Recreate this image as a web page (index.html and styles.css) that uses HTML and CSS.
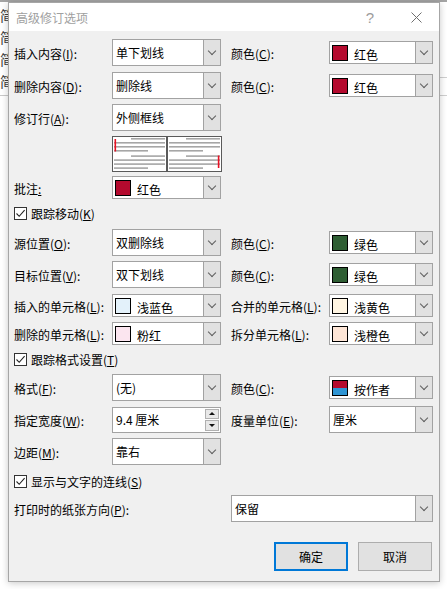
FILE: index.html
```html
<!DOCTYPE html>
<html lang="zh-CN">
<head>
<meta charset="utf-8">
<title>高级修订选项</title>
<link rel="stylesheet" href="styles.css">
</head>
<body>
<div class="topstrip"></div>
<div class="doc-left">
  <span>简</span><span>简</span><span>简</span><span>简</span>
</div>
<div class="doc-left-rule"></div>
<div class="doc-right"></div>

<div class="dialog">
  <div class="titlebar">
    <span class="title">高级修订选项</span>
    <span class="tbtn help">?</span>
    <span class="tbtn close"><svg width="11" height="11" viewBox="0 0 11 11"><path d="M0.5 0.5 L10.5 10.5 M10.5 0.5 L0.5 10.5" stroke="#6f6f6f" stroke-width="1" fill="none"/></svg></span>
  </div>

  <div class="content">
    <div class="row m8">
      <span class="lbl">插入内容(<u>I</u>):</span>
      <div class="combo"><span class="val">单下划线</span><span class="arrow"></span></div>
      <span class="lbl r">颜色(<u>C</u>):</span>
      <div class="combo sm"><span class="sw red"></span><span class="val c">红色</span><span class="arrow"></span></div>
    </div>

    <div class="row m6">
      <span class="lbl">删除内容(<u>D</u>):</span>
      <div class="combo"><span class="val">删除线</span><span class="arrow"></span></div>
      <span class="lbl r">颜色(<u>C</u>):</span>
      <div class="combo sm"><span class="sw red"></span><span class="val c">红色</span><span class="arrow"></span></div>
    </div>

    <div class="row m5">
      <span class="lbl">修订行(<u>A</u>):</span>
      <div class="combo"><span class="val">外侧框线</span><span class="arrow"></span></div>
    </div>

    <div class="row prev m5">
      <span></span>
      <svg class="preview" width="110" height="36" viewBox="0 0 110 36">
        <rect x="0.5" y="0.5" width="54" height="35" fill="#fff" stroke="#5a5a5a"/>
        <rect x="55.5" y="0.5" width="54" height="35" fill="#fff" stroke="#5a5a5a"/>
        <g fill="#a6a6a6">
          <rect x="19" y="2" width="34" height="1.6"/>
          <rect x="2" y="6" width="51" height="1.6"/>
          <rect x="2" y="10" width="51" height="1.6"/>
          <rect x="2" y="14" width="34" height="1.6"/>
          <rect x="19" y="19.3" width="34" height="1.6"/>
          <rect x="2" y="23.3" width="51" height="1.6"/>
          <rect x="2" y="27.3" width="51" height="1.6"/>
          <rect x="2" y="31.3" width="34" height="1.6"/>
          <rect x="74" y="2" width="34" height="1.6"/>
          <rect x="57" y="6" width="51" height="1.6"/>
          <rect x="57" y="10" width="51" height="1.6"/>
          <rect x="57" y="14" width="34" height="1.6"/>
          <rect x="74" y="19.3" width="34" height="1.6"/>
          <rect x="57" y="23.3" width="51" height="1.6"/>
          <rect x="57" y="27.3" width="51" height="1.6"/>
          <rect x="57" y="31.3" width="34" height="1.6"/>
        </g>
        <rect x="2.5" y="3" width="1.6" height="12.5" fill="#e81123"/>
        <rect x="105.8" y="19.5" width="1.6" height="12.5" fill="#e81123"/>
      </svg>
    </div>

    <div class="row s m4">
      <span class="lbl">批注<u>:</u></span>
      <div class="combo sm"><span class="sw red"></span><span class="val c">红色</span><span class="arrow"></span></div>
    </div>

    <label class="check m6"><span class="box"><svg width="11" height="11" viewBox="0 0 11 11"><path d="M1.5 5.5 L4.2 8.3 L9.6 2.2" stroke="#222" stroke-width="1.1" fill="none"/></svg></span><span>跟踪移动(<u>K</u>)</span></label>

    <div class="row m7">
      <span class="lbl">源位置(<u>O</u>):</span>
      <div class="combo"><span class="val">双删除线</span><span class="arrow"></span></div>
      <span class="lbl r">颜色(<u>C</u>):</span>
      <div class="combo sm"><span class="sw green"></span><span class="val c">绿色</span><span class="arrow"></span></div>
    </div>

    <div class="row m5">
      <span class="lbl">目标位置(<u>V</u>):</span>
      <div class="combo"><span class="val">双下划线</span><span class="arrow"></span></div>
      <span class="lbl r">颜色(<u>C</u>):</span>
      <div class="combo sm"><span class="sw green"></span><span class="val c">绿色</span><span class="arrow"></span></div>
    </div>

    <div class="row s m6">
      <span class="lbl">插入的单元格(<u>L</u>):</span>
      <div class="combo sm"><span class="sw lblue"></span><span class="val c">浅蓝色</span><span class="arrow"></span></div>
      <span class="lbl r">合并的单元格(<u>L</u>):</span>
      <div class="combo sm"><span class="sw lyellow"></span><span class="val c">浅黄色</span><span class="arrow"></span></div>
    </div>

    <div class="row s m5">
      <span class="lbl">删除的单元格(<u>L</u>):</span>
      <div class="combo sm"><span class="sw pink"></span><span class="val c">粉红</span><span class="arrow"></span></div>
      <span class="lbl r">拆分单元格(<u>L</u>):</span>
      <div class="combo sm"><span class="sw lorange"></span><span class="val c">浅橙色</span><span class="arrow"></span></div>
    </div>

    <label class="check m6"><span class="box"><svg width="11" height="11" viewBox="0 0 11 11"><path d="M1.5 5.5 L4.2 8.3 L9.6 2.2" stroke="#222" stroke-width="1.1" fill="none"/></svg></span><span>跟踪格式设置(<u>T</u>)</span></label>

    <div class="row m6">
      <span class="lbl">格式(<u>F</u>):</span>
      <div class="combo"><span class="val">(无)</span><span class="arrow"></span></div>
      <span class="lbl r">颜色(<u>C</u>):</span>
      <div class="combo sm"><span class="sw byauthor"></span><span class="val c">按作者</span><span class="arrow"></span></div>
    </div>

    <div class="row m5">
      <span class="lbl">指定宽度(<u>W</u>):</span>
      <div class="spin"><span class="val">9.4 厘米</span><span class="spinbtns"><span class="sb up"></span><span class="sb down"></span></span></div>
      <span class="lbl r">度量单位(<u>E</u>):</span>
      <div class="combo"><span class="val">厘米</span><span class="arrow"></span></div>
    </div>

    <div class="row m5">
      <span class="lbl">边距(<u>M</u>):</span>
      <div class="combo"><span class="val">靠右</span><span class="arrow"></span></div>
    </div>

    <label class="check m8"><span class="box"><svg width="11" height="11" viewBox="0 0 11 11"><path d="M1.5 5.5 L4.2 8.3 L9.6 2.2" stroke="#222" stroke-width="1.1" fill="none"/></svg></span><span>显示与文字的连线(<u>S</u>)</span></label>

    <div class="row m5">
      <span class="lbl span2">打印时的纸张方向(<u>P</u>):</span>
      <div class="combo wide"><span class="val">保留</span><span class="arrow"></span></div>
    </div>

    <div class="buttons m20">
      <button class="btn primary">确定</button>
      <button class="btn">取消</button>
    </div>
  </div>
</div>
</body>
</html>
```

FILE: styles.css
```css
* { box-sizing: border-box; }
html, body { margin: 0; padding: 0; }
body {
  width: 447px;
  height: 589px;
  overflow: hidden;
  position: relative;
  background: #ffffff;
  font-family: "Noto Sans CJK SC", "Noto Sans", sans-serif;
  font-size: 12px;
  color: #000;
}

/* background document behind the dialog */
.topstrip { height: 2px; background: #a4a4a4; }
.doc-left {
  position: absolute;
  left: 0;
  top: 4px;
  display: flex;
  flex-direction: column;
  font-size: 14px;
  line-height: 22px;
  color: #3a3a3a;
}
.doc-left-rule {
  position: absolute;
  left: 0; top: 95px;
  width: 8px; height: 1px;
  background: #c9c9c9;
}
.doc-right {
  position: absolute;
  left: 440px; top: 77px;
  width: 7px; height: 19px;
  border-top: 1px solid #cfcfcf;
  border-bottom: 1px solid #cfcfcf;
}

/* dialog window */
.dialog {
  position: absolute;
  left: 8px;
  top: 2px;
  width: 432px;
  background: #f0f0f0;
  border: 1px solid #a6a6a6;
  box-shadow: 0 1px 7px rgba(0, 0, 0, 0.22);
}
.titlebar {
  height: 28px;
  background: #ffffff;
  display: flex;
  align-items: center;
  padding-left: 7px;
}
.title { flex: 1; color: #a0a0a0; line-height: 16px; padding-top: 1px; }
.tbtn {
  width: 46px;
  height: 28px;
  display: flex;
  align-items: center;
  justify-content: center;
}
.help { color: #9c9c9c; font-family: "Liberation Sans", sans-serif; font-size: 15px; padding-top: 1px; }

.content {
  display: flex;
  flex-direction: column;
  padding: 0 6px 10px 5px;
}
.m4 { margin-top: 4px; }
.m5 { margin-top: 5px; }
.m6 { margin-top: 6px; }
.m7 { margin-top: 7px; }
.m8 { margin-top: 8px; }
.m20 { margin-top: 20px; }

.row {
  display: grid;
  grid-template-columns: 98px 109px 108px 104px;
  align-items: center;
  height: 27px;
}
.row.s { height: 23px; }
.row.prev { height: 36px; }
.lbl { white-space: nowrap; line-height: 16px; padding-top: 2px; }
.lbl.r { padding-left: 10px; }
.lbl.span2 { grid-column: 1 / 3; }
u { text-decoration: underline; text-underline-offset: 1px; }

/* combo boxes */
.combo {
  height: 27px;
  display: flex;
  align-items: stretch;
  background: #fff;
  border: 1px solid #a2a2a2;
}
.combo.sm { height: 23px; }
.combo.wide { grid-column: 3 / 5; margin-left: 10px; }
.val {
  flex: 1;
  display: flex;
  align-items: center;
  padding-left: 3px;
  white-space: nowrap;
  line-height: 16px;
}
.val.c { padding-left: 6px; padding-top: 4px; }
.arrow {
  width: 17px;
  background: #e1e1e1;
  border-left: 1px solid #a2a2a2;
  display: flex;
  align-items: center;
  justify-content: center;
}
.arrow::after {
  content: "";
  width: 5px;
  height: 5px;
  border-right: 1px solid #5e5e5e;
  border-bottom: 1px solid #5e5e5e;
  transform: translateY(-2px) rotate(45deg);
}

/* colour swatches */
.sw {
  width: 16px;
  height: 16px;
  margin: 3px 0 0 2px;
  border: 1px solid #000;
  flex: none;
}
.red { background: #b40a2e; }
.green { background: #2e5e33; }
.lblue { background: #e3f1fa; }
.lyellow { background: #fff5e2; }
.pink { background: #fbe5ef; }
.lorange { background: #fde5d6; }
.byauthor { background: linear-gradient(#b40a2e 0 50%, #2f95d4 50% 100%); }

/* spinner */
.spin {
  height: 26px;
  display: flex;
  background: #fff;
  border: 1px solid #a2a2a2;
}
.spinbtns {
  display: flex;
  flex-direction: column;
  gap: 1px;
  padding: 1px 1px 1px 0;
}
.sb {
  width: 14px;
  flex: 1;
  background: #e8e8e8;
  border: 1px solid #b0b0b0;
  display: flex;
  align-items: center;
  justify-content: center;
}
.sb.up::after {
  content: "";
  border-left: 3px solid transparent;
  border-right: 3px solid transparent;
  border-bottom: 3px solid #111;
}
.sb.down::after {
  content: "";
  border-left: 3px solid transparent;
  border-right: 3px solid transparent;
  border-top: 3px solid #111;
}

/* checkboxes */
.check {
  display: flex;
  align-items: center;
  gap: 4px;
  height: 17px;
  line-height: 16px;
}
.box {
  width: 13px;
  height: 13px;
  border: 1px solid #333;
  background: #fff;
  display: flex;
  align-items: center;
  justify-content: center;
}

/* buttons */
.buttons {
  display: flex;
  justify-content: flex-end;
  gap: 10px;
  padding-right: 1px;
}
.btn {
  font: inherit;
  width: 74px;
  height: 29px;
  background: #e1e1e1;
  border: 1px solid #adadad;
  color: #000;
  padding: 0;
}
.btn.primary { border: 2px solid #0078d7; }
```
